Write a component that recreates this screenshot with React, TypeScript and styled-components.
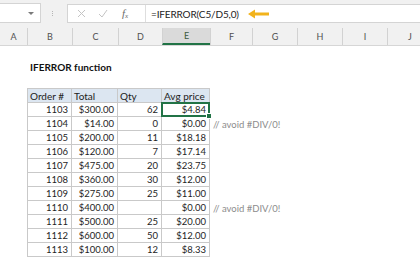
import styled, { createGlobalStyle, css } from "styled-components";

const GlobalStyle = createGlobalStyle`
  html, body {
    margin: 0;
    padding: 0;
    background: #ffffff;
    overflow: hidden;
  }
  body {
    font-family: Lato, "Liberation Sans", sans-serif;
  }
`;

const COLS = "27px 45px 46px 44px 48px 42px 45px 45px 45px 45px";
const LETTERS = ["A", "B", "C", "D", "E", "F", "G", "H", "I", "J"];

type Row = { order: string; total: string; qty: string; avg: string; note?: boolean };

const ROWS: Row[] = [
  { order: "1103", total: "$300.00", qty: "62", avg: "$4.84" },
  { order: "1104", total: "$14.00", qty: "0", avg: "$0.00", note: true },
  { order: "1105", total: "$200.00", qty: "11", avg: "$18.18" },
  { order: "1106", total: "$120.00", qty: "7", avg: "$17.14" },
  { order: "1107", total: "$475.00", qty: "20", avg: "$23.75" },
  { order: "1108", total: "$360.00", qty: "30", avg: "$12.00" },
  { order: "1109", total: "$275.00", qty: "25", avg: "$11.00" },
  { order: "1110", total: "$400.00", qty: "", avg: "$0.00", note: true },
  { order: "1111", total: "$500.00", qty: "25", avg: "$20.00" },
  { order: "1112", total: "$600.00", qty: "50", avg: "$12.00" },
  { order: "1113", total: "$100.00", qty: "12", avg: "$8.33" },
];

const Page = styled.div`
  width: 420px;
  height: 280px;
  overflow: hidden;
  display: flex;
  flex-direction: column;
`;

const Toolbar = styled.div`
  height: 28px;
  background: #f1f1f1;
  display: flex;
  align-items: center;
  box-sizing: border-box;
  padding-bottom: 2px;
`;

const NameBox = styled.div`
  width: 41px;
  height: 20px;
  box-sizing: border-box;
  background: #ffffff;
  border: 1px solid #d4d4d4;
  border-left: none;
  display: flex;
  align-items: center;
  justify-content: flex-end;
  padding-right: 6px;
`;

const Caret = styled.span`
  width: 0;
  height: 0;
  border-left: 3px solid transparent;
  border-right: 3px solid transparent;
  border-top: 3px solid #7a7a7a;
`;

const Grip = styled.div`
  width: 10px;
  margin: 0 10px 0 6px;
  display: flex;
  flex-direction: column;
  align-items: center;
  gap: 1px;
  span {
    width: 1px;
    height: 1px;
    background: #b5b5b5;
  }
`;

const FormulaBar = styled.div`
  flex: 1;
  height: 19px;
  margin-top: 1px;
  box-sizing: border-box;
  background: #ffffff;
  border: 1px solid #d4d4d4;
  border-right: none;
  display: flex;
  align-items: center;
`;

const Buttons = styled.div`
  width: 78px;
  height: 100%;
  display: flex;
  align-items: center;
  padding-left: 9px;
  box-sizing: border-box;
  gap: 12px;
  border-right: 1px solid #dedede;
`;

const Fx = styled.span`
  font-family: "Liberation Serif", serif;
  font-style: italic;
  font-size: 11px;
  color: #6a6a6a;
  margin-left: 2px;
  sub {
    font-size: 7px;
    vertical-align: -1px;
  }
`;

const FormulaText = styled.span`
  font-size: 10px;
  color: #222;
  margin-left: 5px;
  letter-spacing: -0.15px;
`;

const Pointer = styled.svg`
  margin-left: 9px;
  margin-top: 1px;
`;

const Grid = styled.div<{ $h: number }>`
  display: grid;
  grid-template-columns: ${COLS};
  height: ${(p) => p.$h}px;
`;

const ColHead = styled.div<{ $active?: boolean }>`
  display: flex;
  align-items: center;
  justify-content: center;
  font-size: 9px;
  color: #505050;
  background: #f1f1f1;
  border-left: 1px solid #d2d2d2;
  box-sizing: border-box;
  &:first-child {
    border-left: none;
  }
  ${(p) =>
    p.$active &&
    css`
      background: #dadada;
      color: #3a5a40;
      border-bottom: 2px solid #217346;
    `}
`;

const HeaderRule = styled.div`
  height: 1px;
  background: #d6d6d6;
`;

const Title = styled.div`
  grid-column: 2 / span 3;
  font-weight: 700;
  font-size: 10px;
  color: #111;
  display: flex;
  align-items: center;
  padding-left: 3px;
`;

const Cell = styled.div<{ $head?: boolean; $first?: boolean; $top?: boolean; $left?: boolean }>`
  box-sizing: border-box;
  font-size: 9.5px;
  color: #1e1e1e;
  display: flex;
  align-items: center;
  justify-content: ${(p) => (p.$left ? "flex-start" : "flex-end")};
  padding: 0 3px 0 2px;
  border-right: 1px solid #c9c9c9;
  border-bottom: 1px solid #c9c9c9;
  white-space: nowrap;
  ${(p) => p.$first && "border-left: 1px solid #c9c9c9;"}
  ${(p) => p.$top && "border-top: 1px solid #c9c9c9;"}
  ${(p) => p.$head && "background: #dce6f1; color: #222; font-size: 10px;"}
`;

const Selected = styled(Cell)`
  position: relative;
  &::after {
    content: "";
    position: absolute;
    left: -1px;
    top: -1px;
    right: -1px;
    bottom: -1px;
    border: 2px solid #217346;
  }
  &::before {
    content: "";
    position: absolute;
    right: -3px;
    bottom: -3px;
    width: 4px;
    height: 4px;
    background: #217346;
    border: 1px solid #fff;
    z-index: 1;
  }
`;

const Note = styled.div`
  font-size: 9.5px;
  color: #8c8c8c;
  white-space: nowrap;
  display: flex;
  align-items: center;
  padding-left: 3px;
`;

const Blank = styled.div``;

function Toolbars() {
  return (
    <Toolbar>
      <NameBox>
        <Caret />
      </NameBox>
      <Grip>
        <span />
        <span />
        <span />
      </Grip>
      <FormulaBar>
        <Buttons>
          <svg width="9" height="9" viewBox="0 0 9 9">
            <path d="M1 1 L8 8 M8 1 L1 8" stroke="#c4c4c4" strokeWidth="1" fill="none" />
          </svg>
          <svg width="10" height="9" viewBox="0 0 10 9">
            <path d="M1 5 L4 8 L9 1" stroke="#c4c4c4" strokeWidth="1" fill="none" />
          </svg>
          <Fx>
            f<sub>x</sub>
          </Fx>
        </Buttons>
        <FormulaText>=IFERROR(C5/D5,0)</FormulaText>
        <Pointer width="22" height="10" viewBox="0 0 22 10">
          <path d="M0 5 L7 0.5 L7 3.5 L21 3.5 L21 6.5 L7 6.5 L7 9.5 Z" fill="#f2b31c" />
        </Pointer>
      </FormulaBar>
    </Toolbar>
  );
}

export default function App() {
  return (
    <Page>
      <GlobalStyle />
      <Toolbars />
      <Grid $h={17}>
        {LETTERS.map((l) => (
          <ColHead key={l} $active={l === "E"}>
            {l}
          </ColHead>
        ))}
      </Grid>
      <HeaderRule />
      <Grid $h={14} />
      <Grid $h={14}>
        <Blank />
        <Title>IFERROR function</Title>
      </Grid>
      <Grid $h={14} />
      <Grid $h={15}>
        <Blank />
        <Cell $head $first $top $left>Order #</Cell>
        <Cell $head $top $left>Total</Cell>
        <Cell $head $top $left>Qty</Cell>
        <Cell $head $top $left>Avg price</Cell>
      </Grid>
      {ROWS.map((r, i) => (
        <Grid $h={14} key={r.order}>
          <Blank />
          <Cell $first>{r.order}</Cell>
          <Cell>{r.total}</Cell>
          <Cell>{r.qty}</Cell>
          {i === 0 ? <Selected>{r.avg}</Selected> : <Cell>{r.avg}</Cell>}
          {r.note && <Note>// avoid #DIV/0!</Note>}
        </Grid>
      ))}
    </Page>
  );
}
